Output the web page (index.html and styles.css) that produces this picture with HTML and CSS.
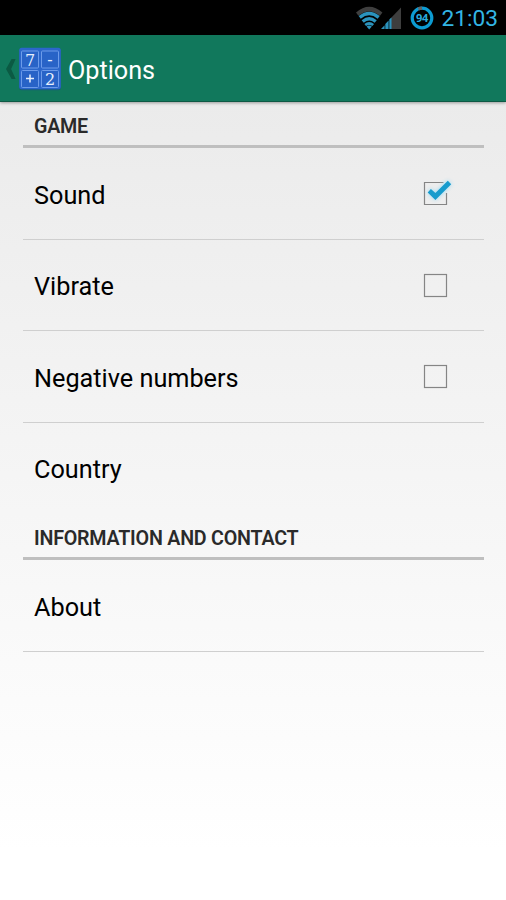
FILE: index.html
```
<!DOCTYPE html>
<html lang="en">
<head>
<meta charset="utf-8">
<title>Options</title>
<link rel="stylesheet" href="styles.css">
</head>
<body>
<div class="status">
  <svg class="signals" width="48" height="26" viewBox="0 0 48 26">
    <path d="M1 7.5Q14.2-3.8 27.4 7.5L25 10.8Q14.2 2 3.4 10.8z" fill="#3f3f3f"/>
    <g fill="none" stroke="#2b93bd" stroke-width="3.3">
      <path d="M4.7 12.4Q14.2 4.6 23.7 12.4M7.7 16.4Q14.2 11 20.7 16.4"/>
      <path d="M10.2 20Q14.2 17 18.2 20" stroke-width="2.8"/>
    </g>
    <path d="M11.6 21.4Q14.2 19.8 16.8 21.4L14.2 24.4z" fill="#2b93bd"/>
    <path d="M46 2.5V24H35.5V13.5z" fill="#3e3e3e"/>
    <path d="M26 24L29.6 20.2V24zM30.3 24V19L33.6 15.6V24zM34.3 24V14.6L36.5 12.6V24z" fill="#2b93bd"/>
  </svg>
  <svg class="battery" width="24" height="24" viewBox="0 0 24 24">
    <circle cx="12" cy="12" r="9.8" fill="none" stroke="#0c9bd2" stroke-width="3.2"/>
    <path d="M8.3 2.9A9.8 9.8 0 0 1 12 2.2" fill="none" stroke="#646464" stroke-width="3.2"/>
    <text class="level" x="12" y="16.1" text-anchor="middle">94</text>
  </svg>
  <span class="clock">21:03</span>
</div>
<header class="bar">
  <svg class="back" width="11" height="22" viewBox="0 0 11 22"><path d="M5.6 1H9.6L5.1 11L9.6 21H5.6L0 11z" fill="#0b5a43"/></svg>
  <svg class="logo" width="44" height="44" viewBox="0 0 44 44">
    <rect x="1.2" y="1.8" width="41.6" height="41.4" rx="2.5" fill="#195b77"/>
    <rect x="1.2" y=".8" width="41.6" height="41.4" rx="2.5" fill="#2b66cb"/>
    <g fill="#2863c7" stroke="#6c9bea" stroke-width="1">
      <rect x="3.5" y="4" width="17" height="17" rx="1"/><rect x="23.5" y="4" width="17" height="17" rx="1"/>
      <rect x="3.5" y="23.5" width="17" height="17" rx="1"/><rect x="23.5" y="23.5" width="17" height="17" rx="1"/>
    </g>
    <g class="glyphs" text-anchor="middle"><text x="12" y="18.5">7</text><text x="32" y="18">-</text><text x="32" y="37.5">2</text></g>
    <path d="M8 31.5H16M12 27.5V35.5" stroke="#e6effc" stroke-width="1.5"/>
  </svg>
  <h1>Options</h1>
</header>
<main>
  <h2>GAME</h2>
  <label class="row"><span>Sound</span>
    <svg class="box" width="40" height="40" viewBox="0 0 40 40">
      <path d="M25.5 8.5H6.5V30.5H28.5V19" fill="none" stroke="#858585" stroke-width="1.2"/>
      <path class="glow" d="M9.7 18.4L12.9 15L17.4 19L29.8 6.8L33.2 10.2L17.4 26z" fill="#169bcd"/>
    </svg>
  </label>
  <label class="row"><span>Vibrate</span>
    <svg class="box" width="40" height="40" viewBox="0 0 40 40"><rect x="6.5" y="8.5" width="22" height="22" fill="none" stroke="#858585" stroke-width="1.2"/></svg>
  </label>
  <label class="row"><span>Negative numbers</span>
    <svg class="box" width="40" height="40" viewBox="0 0 40 40"><rect x="6.5" y="8.5" width="22" height="22" fill="none" stroke="#858585" stroke-width="1.2"/></svg>
  </label>
  <div class="row plain">Country</div>
  <h2>INFORMATION AND CONTACT</h2>
  <div class="row">About</div>
</main>
</body>
</html>
```
FILE: styles.css
```
* { box-sizing: border-box; }
body {
  margin: 0;
  height: 900px;
  overflow: hidden;
  font-family: Roboto, "Liberation Sans", sans-serif;
  color: #000;
  background: linear-gradient(#ebebeb 100px, #fff 850px);
}
.status {
  display: flex;
  align-items: center;
  height: 35px;
  padding: 1px 8px 0 0;
  justify-content: flex-end;
  background: #000;
}
.signals { margin: 0 7px 1px 0; }
.battery { margin-right: 8px; }
.level { font: 700 11px "Noto Sans", sans-serif; letter-spacing: -.4px; fill: #29a9dd; }
.clock { padding-top: 1px; font-size: 22.7px; line-height: 34px; color: #33b5e5; }
.bar {
  display: flex;
  align-items: center;
  height: 67px;
  padding: 2px 0 0 6px;
  background: #11785c;
  border-bottom: 1px solid #0d5944;
  box-shadow: 0 1px 3px rgba(0, 0, 0, .35);
}
.logo { margin: 0 6px 0 1px; }
.glyphs { font: 16px "DejaVu Serif", serif; fill: #e6effc; }
h1 { margin: 0; padding-top: 4px; font-size: 25.2px; font-weight: 400; line-height: 30px; color: #fff; }
main { padding: 0 22.5px; }
h2 {
  margin: 0;
  height: 46px;
  padding: 12px 11.5px 0;
  border-bottom: 3px solid #bfbfbf;
  font-size: 19.7px;
  font-weight: 600;
  letter-spacing: -.23px;
  line-height: 26px;
  white-space: nowrap;
  color: #2a2a2a;
}
.row {
  display: flex;
  align-items: center;
  justify-content: space-between;
  height: 91.6px;
  padding: 3px 26px 0 11.5px;
  border-bottom: 1px solid #cfcfcf;
  font-size: 25.25px;
}
.row span { padding-top: 1px; }
.plain { border-bottom-color: transparent; }
.box { margin-bottom: 1px; }
.glow { filter: drop-shadow(0 0 2px #8fd8f5); }
```
